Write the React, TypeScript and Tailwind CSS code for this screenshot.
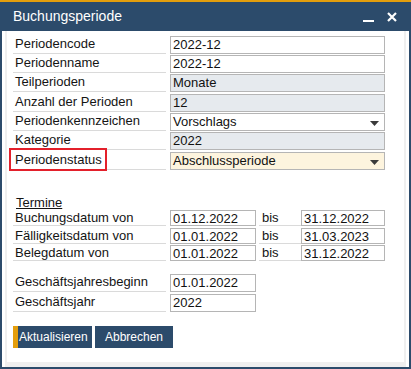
const font = { fontFamily: '"Liberation Sans", Arial, sans-serif' }

type Field = { label: string; value: string; kind?: 'ro' | 'select' | 'active' }

const fields: Field[] = [
  { label: 'Periodencode', value: '2022-12' },
  { label: 'Periodenname', value: '2022-12' },
  { label: 'Teilperioden', value: 'Monate', kind: 'ro' },
  { label: 'Anzahl der Perioden', value: '12', kind: 'ro' },
  { label: 'Periodenkennzeichen', value: 'Vorschlags', kind: 'select' },
  { label: 'Kategorie', value: '2022', kind: 'ro' },
  { label: 'Periodenstatus', value: 'Abschlussperiode', kind: 'active' },
]

const dates = [
  { label: 'Buchungsdatum von', from: '01.12.2022', to: '31.12.2022' },
  { label: 'Fälligkeitsdatum von', from: '01.01.2022', to: '31.03.2023' },
  { label: 'Belegdatum von', from: '01.01.2022', to: '31.12.2022' },
]

function Arrow() {
  return (
    <svg width="9" height="5" viewBox="0 0 9 5" className="absolute right-[5px] top-[7px]">
      <path d="M0 0 H9 L4.5 5 Z" fill="#3a3a3a" />
    </svg>
  )
}

function Input({ value, kind, w = 'w-[215px]', h = 'h-[18px]' }: { value: string; kind?: Field['kind']; w?: string; h?: string }) {
  const bg = kind === 'ro' ? 'bg-[#e6eaee]' : kind === 'active' ? 'bg-[#fdf4de]' : 'bg-white'
  return (
    <div className={`relative ${w} ${h} ${bg} border border-[#b5b5b5] pl-[2px] leading-[15px] text-[#111]`}>
      {value}
      {(kind === 'select' || kind === 'active') && <Arrow />}
    </div>
  )
}

export default function App() {
  return (
    <div className="w-[411px] h-[369px] flex flex-col bg-[#2c4b6b] border-t-2 border-[#e49e0c] text-[13px] text-[#141414]" style={font}>
      <div className="h-[29px] flex items-center px-[13px] text-white text-[14px]">
        <span className="flex-1">Buchungsperiode</span>
        <div className="w-[11px] h-[2px] bg-white mt-[9px] mr-[13px]" />
        <svg width="10" height="10" viewBox="0 0 10 10" className="mr-[1px]">
          <path d="M1 1 L9 9 M9 1 L1 9" stroke="white" strokeWidth="2.2" />
        </svg>
      </div>

      <div className="flex-1 mx-[2px] mb-[2px] bg-white pl-[3px] pr-[3px] flex">
        <div className="flex-1 border-l-2 border-r-2 border-b-[5px] border-[#efefef] pl-[6px] pt-[5px]">
          <div className="flex flex-col">
            {fields.map((f, i) => (
              <div key={f.label} className={`flex h-[18px] ${i % 3 === 2 ? 'mb-[2px]' : 'mb-[1px]'}`}>
                <div className="w-[153px] border-b border-[#dadada] pl-[2px] leading-[16px] relative">
                  {f.label === 'Periodenstatus' && (
                    <div className="absolute left-[-4px] top-[-4px] w-[98px] h-[23px] border-2 border-[#e3202b]" />
                  )}
                  {f.label}
                </div>
                <div className="ml-[4px]">
                  <Input value={f.value} kind={f.kind} />
                </div>
              </div>
            ))}
          </div>

          <div className="mt-[24px] pl-[3px] underline leading-[15px]">Termine</div>

          <div className="flex flex-col">
            {dates.map((d, i) => (
              <div key={d.label} className={`flex h-[16px] ${i === 0 ? 'mb-[2px]' : 'mb-[1px]'}`}>
                <div className="w-[153px] border-b border-[#dadada] pl-[2px] leading-[15px]">{d.label}</div>
                <div className="ml-[4px]">
                  <Input value={d.from} w="w-[86px]" h="h-[16px]" />
                </div>
                <div className="ml-[3px] w-[42px] border-b border-[#dadada] pl-[3px] leading-[15px]">bis</div>
                <div>
                  <Input value={d.to} w="w-[84px]" h="h-[16px]" />
                </div>
              </div>
            ))}
          </div>

          <div className="mt-[12px] flex flex-col gap-[2px]">
            {[
              { label: 'Geschäftsjahresbeginn', value: '01.01.2022' },
              { label: 'Geschäftsjahr', value: '2022' },
            ].map((r) => (
              <div key={r.label} className="flex h-[18px]">
                <div className="w-[153px] border-b border-[#dadada] pl-[2px] leading-[16px]">{r.label}</div>
                <div className="ml-[4px]">
                  <Input value={r.value} w="w-[86px]" h="h-[18px]" />
                </div>
              </div>
            ))}
          </div>

          <div className="mt-[14px] flex gap-[3px] text-[12px]">
            <button className="h-[22px] w-[79px] bg-[#2c4b6b] text-white border-l-[5px] border-[#e49e0c] pl-[1px] text-left leading-[22px]">
              Aktualisieren
            </button>
            <button className="h-[22px] w-[78px] bg-[#2c4b6b] text-white leading-[22px]">Abbrechen</button>
          </div>
        </div>
      </div>
    </div>
  )
}
